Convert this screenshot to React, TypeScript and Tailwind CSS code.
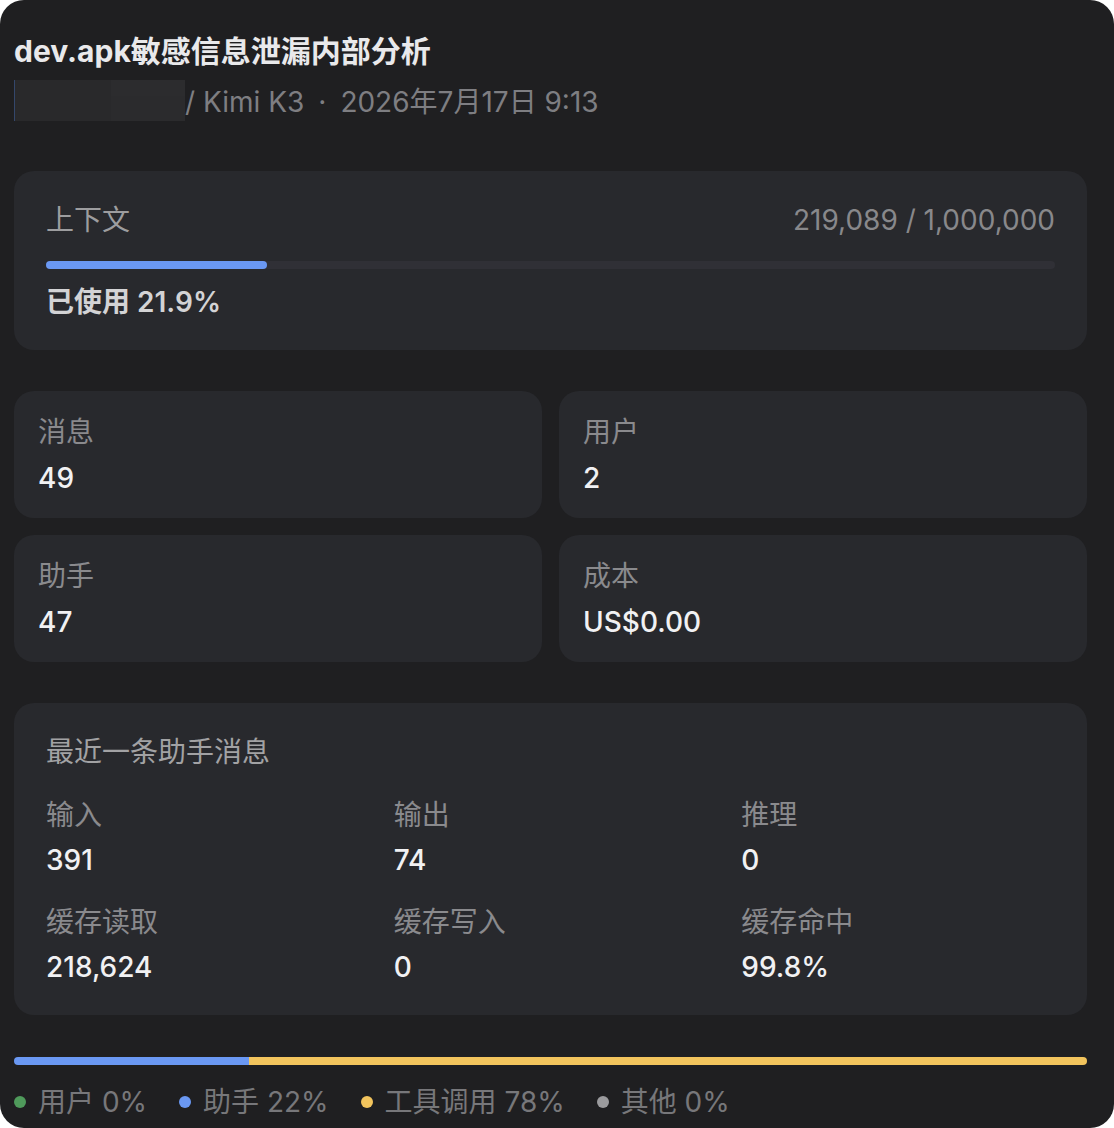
const FONT = { fontFamily: 'Inter, "Noto Sans CJK SC", sans-serif' };

const COUNTS = [
  { label: '消息', value: '49' },
  { label: '用户', value: '2' },
  { label: '助手', value: '47' },
  { label: '成本', value: 'US$0.00' },
];

const LAST_MESSAGE = [
  { label: '输入', value: '391' },
  { label: '输出', value: '74' },
  { label: '推理', value: '0' },
  { label: '缓存读取', value: '218,624' },
  { label: '缓存写入', value: '0' },
  { label: '缓存命中', value: '99.8%' },
];

const LEGEND = [
  { label: '用户 0%', dot: 'bg-[#4f9a5b]' },
  { label: '助手 22%', dot: 'bg-[#6a98f3]' },
  { label: '工具调用 78%', dot: 'bg-[#f2c45d]' },
  { label: '其他 0%', dot: 'bg-[#9b9b9e]' },
];

const used = 219089;
const limit = 1000000;
const usedPct = (used / limit) * 100;

export default function App() {
  return (
    <div className="bg-white">
      <div
        className="w-[1114px] h-[1128px] overflow-hidden rounded-3xl bg-[#1f1f21] pl-[14px] pr-[27px] pt-[33px] text-[28px] leading-[36px]"
        style={FONT}
      >
        <h1 className="font-bold text-[30px] text-[#e9e9eb]">dev.apk敏感信息泄漏内部分析</h1>
        <div className="mt-[11px] flex h-[41px] items-center text-[#7e7e82]">
          {/* owner name is masked */}
          <div className="flex h-[41px] w-[171px] border-l border-[#34476b]">
            <div className="flex-1 bg-[#29292b]" />
            <div className="flex w-[74px] flex-col">
              <div className="h-[16px] bg-[#2c2c2e]" />
              <div className="flex-1 bg-[#2b2b2d]" />
            </div>
          </div>
          <span className="pt-[2px]">/ Kimi K3</span>
          <span className="mx-[14px] pt-[2px]">·</span>
          <span className="pt-[2px]">2026年7月17日 9:13</span>
        </div>

        <section className="mt-[50px] rounded-[20px] bg-[#28292d] px-8 pt-[31px] pb-[30px]">
          <div className="flex justify-between">
            <span className="text-[#9d9d9f]">上下文</span>
            <span className="text-[#88888b]">219,089 / 1,000,000</span>
          </div>
          <div className="mt-[23px] h-2 rounded-full bg-[#303036]">
            <div className="h-2 rounded-full bg-[#6a98f3]" style={{ width: `${usedPct}%` }} />
          </div>
          <div className="mt-[15px] font-semibold text-[#d3d3d5]">已使用 {usedPct.toFixed(1)}%</div>
        </section>

        <div className="mt-[41px] grid grid-cols-2 gap-[17px]">
          {COUNTS.map((c) => (
            <div key={c.label} className="rounded-[20px] bg-[#28292d] px-6 pt-[23px] pb-[22px]">
              <div className="text-[#8a8a8d]">{c.label}</div>
              <div className="mt-[10px] font-medium text-[#f1f1f3]">{c.value}</div>
            </div>
          ))}
        </div>

        <section className="mt-[41px] rounded-[20px] bg-[#28292d] px-8 pt-[31px] pb-[30px]">
          <div className="text-[#a2a2a4]">最近一条助手消息</div>
          <div className="mt-[27px] grid grid-cols-3 gap-x-[34px] gap-y-[26px]">
            {LAST_MESSAGE.map((m) => (
              <div key={m.label}>
                <div className="text-[#8a8a8d]">{m.label}</div>
                <div className="mt-[9px] font-medium text-[#f1f1f3]">{m.value}</div>
              </div>
            ))}
          </div>
        </section>

        <div className="mt-[42px] flex h-2 overflow-hidden rounded-full">
          <div className="h-2 bg-[#6a98f3]" style={{ width: '21.9%' }} />
          <div className="h-2 flex-1 bg-[#f2c45d]" />
        </div>

        <div className="mt-[19px] flex items-center gap-8 text-[#77777a]">
          {LEGEND.map((l) => (
            <div key={l.label} className="flex items-center gap-3">
              <span className={`h-3 w-3 rounded-full ${l.dot}`} />
              <span>{l.label}</span>
            </div>
          ))}
        </div>
      </div>
    </div>
  );
}
